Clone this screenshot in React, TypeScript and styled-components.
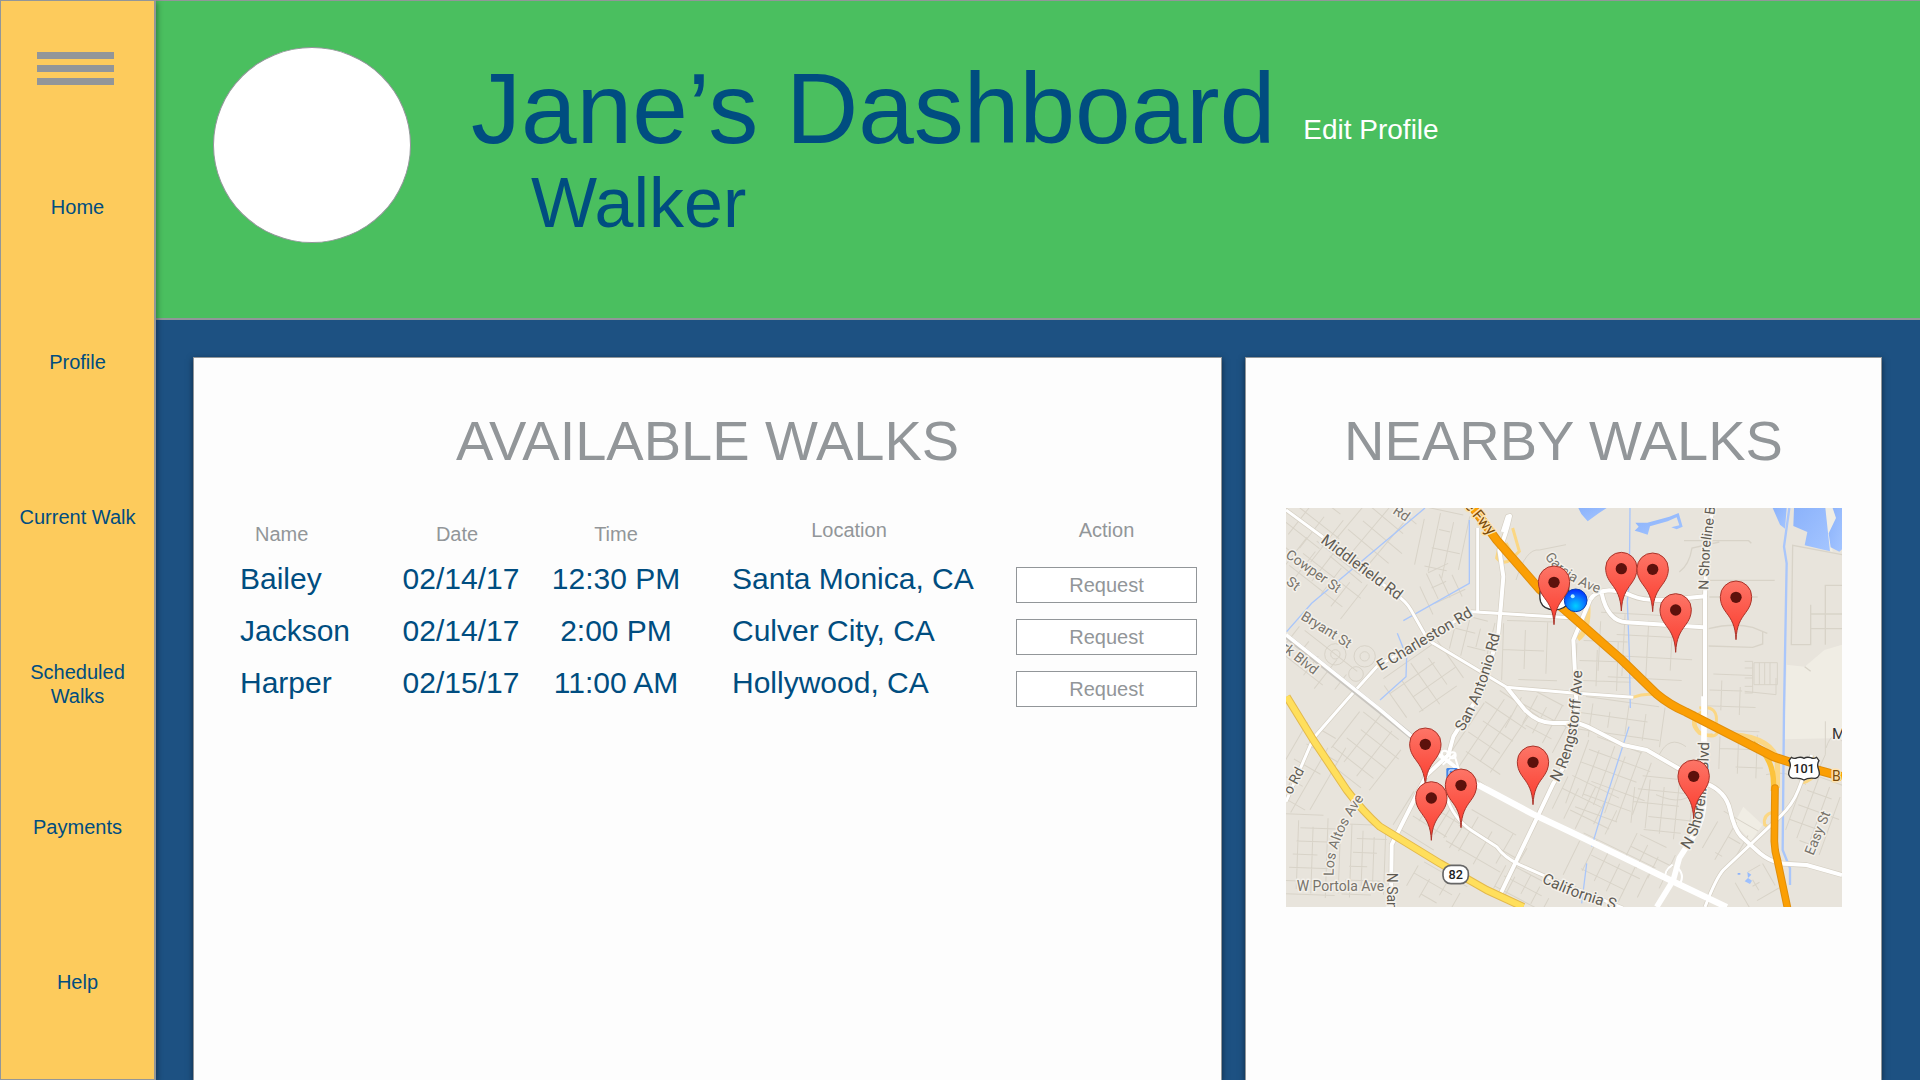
import React from 'react';
import styled, { createGlobalStyle } from 'styled-components';

const color = {
  yellow: '#fdcb5c',
  green: '#4abf5f',
  blue: '#1d5182',
  navy: '#004d80',
  grey: '#929699',
  paper: '#fdfdfd',
};

const GlobalStyle = createGlobalStyle`
  *, *::before, *::after { box-sizing: border-box; }
  body {
    margin: 0;
    font-family: "Liberation Sans", Arial, sans-serif;
    color: ${color.navy};
  }
`;

const Page = styled.div`
  display: grid;
  grid-template-columns: 156px minmax(0, 1fr);
  min-height: 100vh;
`;

const Sidebar = styled.aside`
  position: relative;
  z-index: 1;
  padding-top: 51px;
  background: ${color.yellow};
  border: 1px solid ${color.grey};
  border-right-width: 2px;
  box-shadow: 1px 2px 6px rgba(0, 0, 0, 0.4);
`;

const MenuButton = styled.button`
  display: flex;
  flex-direction: column;
  gap: 6px;
  width: 77px;
  margin: 0 0 0 36px;
  padding: 0;
  border: 0;
  background: none;
  cursor: pointer;
`;

const MenuBar = styled.span`
  width: 100%;
  height: 7px;
  background: ${color.grey};
`;

const NavList = styled.ul`
  margin: 110px 0 0;
  padding: 0 16px;
  list-style: none;
`;

const NavItem = styled.li`
  height: 155px;
  text-align: center;
  &:last-child { height: auto; }
`;

const NavLink = styled.a`
  display: block;
  font-size: 20px;
  line-height: 24px;
  color: ${color.navy};
  text-decoration: none;
`;

const Content = styled.div`
  display: flex;
  flex-direction: column;
  background: ${color.blue};
`;

const Header = styled.header`
  display: flex;
  align-items: flex-start;
  gap: 60px;
  min-height: 320px;
  padding: 46px 57px;
  background: ${color.green};
  border-top: 1px solid ${color.grey};
  border-bottom: 2px solid ${color.grey};
`;

const Avatar = styled.div`
  flex: none;
  width: 198px;
  height: 196px;
  border: 1px solid ${color.grey};
  border-radius: 50%;
  background: #fff;
`;

const Heading = styled.div`
  padding-top: 11px;
`;

const TitleRow = styled.div`
  display: flex;
  align-items: flex-end;
  gap: 28px;
`;

const Title = styled.h1`
  margin: 0;
  font-size: 100px;
  line-height: 100px;
  font-weight: 400;
`;

const EditLink = styled.a`
  font-size: 28px;
  line-height: 56px;
  color: #fff;
  text-decoration: none;
`;

const Role = styled.p`
  margin: 0;
  padding-left: 60px;
  font-size: 70px;
  line-height: 90px;
`;

const Panels = styled.main`
  flex: 1;
  display: grid;
  grid-template-columns: minmax(0, 1029fr) minmax(0, 637fr);
  gap: 23px;
  padding: 37px 38px 0 37px;
`;

const Panel = styled.section`
  background: ${color.paper};
  border: 1px solid ${color.grey};
  border-bottom: 0;
  box-shadow: 0 2px 6px rgba(0, 0, 0, 0.5);
  padding-top: 51px;
`;

const PanelTitle = styled.h2`
  margin: 0;
  font-size: 56px;
  line-height: 64px;
  font-weight: 400;
  text-align: center;
  color: ${color.grey};
`;

const TableArea = styled.div`
  padding: 45px 24px 0 46px;
`;

const WalkTable = styled.table`
  width: 100%;
  table-layout: fixed;
  border-collapse: collapse;
`;

const Column = styled.col<{ $width: number }>`
  width: ${(p) => p.$width}px;
`;

const HeadCell = styled.th<{ $align?: string; $left?: number; $right?: number; $raised?: boolean }>`
  padding: 0 ${(p) => p.$right ?? 0}px ${(p) => (p.$raised ? 17 : 13)}px ${(p) => p.$left ?? 0}px;
  font-size: 20px;
  line-height: 24px;
  font-weight: 400;
  text-align: ${(p) => p.$align ?? 'center'};
  vertical-align: bottom;
  color: ${color.grey};
`;

const Cell = styled.td<{ $align?: string; $left?: number }>`
  height: 52px;
  padding: 0 0 0 ${(p) => p.$left ?? 0}px;
  font-size: 30px;
  line-height: 40px;
  text-align: ${(p) => p.$align ?? 'left'};
  vertical-align: top;
  white-space: nowrap;
`;

const ActionCell = styled.td`
  padding: 8px 0;
  vertical-align: top;
`;

const RequestButton = styled.button`
  display: block;
  width: 100%;
  height: 36px;
  padding: 0;
  border: 1px solid ${color.grey};
  background: #fff;
  font: 20px/24px "Liberation Sans", Arial, sans-serif;
  color: ${color.grey};
  cursor: pointer;
`;

const MapFrame = styled.div`
  padding: 35px 39px 0 40px;
`;

const MapSvg = styled.svg`
  display: block;
  width: 100%;
  height: auto;
  font-family: Roboto, "Liberation Sans", sans-serif;
`;

const Label = styled.text<{ $size?: number; $fill?: string; $halo?: string }>`
  font-size: ${(p) => p.$size ?? 44}px;
  fill: ${(p) => p.$fill ?? '#5e5a52'};
  stroke: ${(p) => p.$halo ?? '#f3f0ea'};
  stroke-width: 9px;
  stroke-linejoin: round;
  paint-order: stroke;
`;

const navItems = ['Home', 'Profile', 'Current Walk', 'Scheduled Walks', 'Payments', 'Help'];

const walks = [
  { name: 'Bailey', date: '02/14/17', time: '12:30 PM', location: 'Santa Monica, CA' },
  { name: 'Jackson', date: '02/14/17', time: '2:00 PM', location: 'Culver City, CA' },
  { name: 'Harper', date: '02/15/17', time: '11:00 AM', location: 'Hollywood, CA' },
];

// Street blocks: centre, half extents, rotation, block size
const blocks = [
  [70, 60, 90, 90, 38, 52, 60],
  [270, 90, 130, 90, -50, 48, 62],
  [470, 110, 70, 100, 12, 44, 58],
  [120, 210, 120, 70, 38, 46, 54],
  [470, 240, 60, 60, -25, 34, 46],
  [90, 470, 110, 60, 38, 50, 48],
  [420, 520, 110, 80, -35, 52, 48],
  [560, 390, 60, 60, 14, 38, 44],
  [740, 430, 90, 90, 2, 66, 88],
  [250, 720, 110, 90, -52, 46, 56],
  [60, 790, 70, 130, 30, 46, 58],
  [620, 690, 130, 80, -56, 52, 44],
  [770, 640, 90, 70, 28, 40, 52],
  [960, 480, 90, 80, 2, 62, 60],
  [1080, 420, 140, 100, 3, 72, 64],
  [1000, 640, 140, 60, 8, 54, 50],
  [980, 820, 110, 110, 20, 40, 44],
  [1130, 900, 90, 90, 6, 44, 40],
  [900, 900, 90, 70, 26, 44, 48],
  [230, 1060, 70, 110, 2, 34, 42],
  [70, 1050, 80, 130, 2, 44, 40],
  [440, 930, 80, 90, -58, 54, 60],
  [600, 1010, 120, 70, 30, 58, 60],
  [720, 1150, 90, 50, 28, 40, 40],
  [970, 1090, 120, 70, 26, 46, 50],
  [1090, 1060, 70, 60, 26, 44, 44],
  [1380, 740, 80, 70, 2, 56, 54],
  [1330, 1000, 60, 70, 30, 50, 60],
  [1420, 1130, 60, 50, -30, 50, 44],
  [1590, 920, 70, 110, 20, 40, 50],
  [1330, 560, 80, 60, 2, 56, 48],
  [450, 1140, 80, 50, 30, 50, 44],
];

const blockPath = ([, , hw, hh, , dx, dy]: number[], seed: number) => {
  let d = '';
  let i = seed;
  for (let x = -hw; x <= hw; x += dx, i += 1) {
    const trim = ((i * 37) % 5) * 9;
    d += `M${x} ${-hh + trim}V${hh - ((i * 23) % 4) * 12}`;
  }
  for (let y = -hh; y <= hh; y += dy, i += 1) {
    const trim = ((i * 29) % 6) * 10;
    d += `M${-hw + trim} ${y}H${hw - ((i * 17) % 5) * 14}`;
  }
  return d;
};

const thinRoads = [
  'M0 6L102 81L332 261Q360 280 375 306L412 371Q424 396 442 406L592 496L662 538L852 554L1042 568',
  'M575 60V310',
  'M0 881L82 691L182 576L272 476L557 311L865 330',
  'M482 866Q500 930 560 970L632 1016Q654 1048 700 1070L790 1110L1010 1200',
  'M1577 741L1537 846Q1520 890 1482 926L1312 1086Q1290 1110 1257 1197',
];

const mainRoads = [
  'M650 72L665 26L672 24Q660 80 640 126L652 206L645 290L637 376L592 540L502 686L487 741L422 801L317 1010L315 1197',
  'M662 538L717 606Q755 645 800 645H870Q890 648 920 664L1012 711L1082 726L1177 781L1260 826Q1320 850 1332 906T1365 985L1422 1036Q1460 1068 1510 1068L1562 1071L1668 1101',
  'M912 276Q925 250 970 247Q1010 250 1040 264T1140 276L1257 265V620',
  'M947 256Q965 340 1022 343L1252 358',
  'M912 276L862 396L872 600Q880 720 802 826L757 921L642 1161',
  'M1280 0L1262 120L1257 265',
];

const creeks = [
  'M417 0L77 286L2 371',
  'M550 36V226L352 338',
  'M334 376L362 446L360 506L282 576',
  'M1032 0L1030 226L1024 280L1030 436L1033 600',
  'M1029 656L962 866L917 1016',
  'M902 1066L887 1186',
];

const ponds = [
  'M877 0H962L938 16L905 40L886 18Z',
  'M1048 44L1084 44L1150 26L1178 15L1190 56L1172 64L1156 58L1180 52L1172 28L1145 40L1092 55L1085 80L1060 72L1046 68L1058 56Z',
  'M1460 0H1502L1497 62L1482 50Z',
  'M1524 0H1618L1632 130L1556 112L1564 72L1522 54Z',
  'M1640 0H1668V124L1660 131L1634 118L1628 76L1650 30Z',
];

const pins = [
  [804, 223],
  [1006, 182],
  [1100, 184],
  [1169, 306],
  [1350, 268],
  [418, 709],
  [436, 870],
  [525, 832],
  [741, 763],
  [1223, 805],
];

const Shield101 = ({ x, y }: { x: number; y: number }) => (
  <g transform={`translate(${x} ${y})`}>
    <path
      d="M-38 -34Q-30 -28 -20 -33Q-8 -36 0 -31Q8 -36 20 -33Q30 -28 38 -34L45 -24Q38 -12 43 0Q52 24 34 29Q12 26 0 34Q-12 26 -34 29Q-52 24 -43 0Q-38 -12 -45 -24Z"
      fill="#fff"
      stroke="#333"
      strokeWidth="4"
    />
    <text y="13" fontSize="38" fontWeight="500" textAnchor="middle" fill="#222">101</text>
  </g>
);

const NearbyMap = () => (
  <MapSvg viewBox="0 0 1668 1197" role="img" aria-label="Map of nearby walks">
    <defs>
      <linearGradient id="pinFill" x1="0" y1="0" x2="0" y2="1">
        <stop offset="0" stopColor="#fd7567" />
        <stop offset="1" stopColor="#fb3b2d" />
      </linearGradient>
      <radialGradient id="dotFill" cx="0.5" cy="0.75" r="0.7">
        <stop offset="0" stopColor="#00d0ff" />
        <stop offset="0.55" stopColor="#0a7dff" />
        <stop offset="1" stopColor="#0433ff" />
      </radialGradient>
      <linearGradient id="water" x1="0" y1="0" x2="1" y2="1">
        <stop offset="0" stopColor="#8bb2fb" />
        <stop offset="1" stopColor="#a4c5ff" />
      </linearGradient>
      <path id="sanAntonio" d="M532 672Q612 540 650 340" />
      <path id="garcia" d="M776 146Q825 225 980 270" />
      <path id="shorelineTop" d="M1267 246L1272 120L1296 -60" />
      <path id="rengstorff" d="M818 824Q895 690 888 440" />
      <path id="shorelineLow" d="M1208 1026Q1270 950 1270 660" />
      <path id="california" d="M766 1122Q860 1175 1080 1230" />
      <path id="losAltos" d="M143 1104Q140 1000 235 870" />
    </defs>

    <rect width="1668" height="1197" fill="#e8e4dc" />
    <path d="M1502 470L1556 476L1615 426L1668 410V690L1495 694Z" fill="#f0ede4" />
    <path d="M1372 896L1430 950L1395 1000L1345 945Z" fill="#f0ede4" />
    <path d="M1618 0H1640L1652 26L1632 78L1640 131L1626 128Z" fill="#f0ede4" />

    <g fill="none" stroke="#d8d3c8" strokeWidth="3">
      {blocks.map((b, i) => (
        <path key={i} d={blockPath(b, i)} transform={`translate(${b[0]} ${b[1]}) rotate(${b[4]})`} />
      ))}
      <circle cx="148" cy="439" r="32" />
      <circle cx="148" cy="439" r="14" />
      <circle cx="236" cy="445" r="32" />
      <circle cx="236" cy="445" r="14" />
      <circle cx="210" cy="498" r="22" />
      <path d="M1194 98H1388L1396 106M1180 192Q1210 170 1218 120L1300 102M1270 217H1466M1270 267H1415" strokeWidth="4" />
      <path d="M1268 362Q1340 344 1400 358L1444 376M1430 372V408L1400 418L1268 414M1668 140L1520 112L1516 410H1574V290M1618 410V232H1668M1574 318H1668M1574 362H1668M1556 476L1574 490" strokeWidth="4" />
      <path d="M1376 460H1400V555H1376M1376 480H1400M1376 510H1400M1376 535H1400M1404 464H1474V530H1404ZM1420 464V530M1436 464V530M1452 464V530M1376 550L1470 560V510" />
      <path d="M690 216Q720 120 760 126L840 110M700 180Q750 240 800 216" />
      <path d="M1120 740Q1150 680 1200 716M1110 860Q1200 900 1230 840M1440 800Q1500 780 1560 830" />
      <path d="M1618 640V740L1600 780M1620 720Q1640 660 1668 700" />
    </g>

    <g fill="url(#water)">
      {ponds.map((d) => <path key={d} d={d} />)}
      <path d="M1355 1095h8v5h-8zM1384 1092l12 8l-10 10l12 8l-6 10l-16-8l10-10z" />
    </g>
    <g fill="none" stroke="#a9c6fb" strokeWidth="4">
      {creeks.map((d) => <path key={d} d={d} />)}
      <path d="M1510 0L1494 116L1502 166L1494 606L1490 1026L1512 1081V1131" strokeWidth="7" />
    </g>

    <g fill="none" stroke="#fbd784" strokeWidth="9">
      <path d="M665 60Q640 100 632 150Q650 172 675 155L700 130L680 60M660 105L690 160" />
      <path d="M905 290Q910 370 875 392" strokeWidth="16" />
      <path d="M1040 568Q1120 540 1170 598" />
      <path d="M1240 600Q1300 590 1290 650Q1310 700 1240 676Q1200 640 1250 610M1225 610Q1220 690 1280 680" />
      <path d="M1462 912Q1430 920 1436 950Q1450 960 1462 948" />
      <path d="M1340 680Q1460 690 1474 760V840" strokeWidth="16" />
      <path d="M1578 745Q1610 810 1550 824" />
    </g>

    <g fill="none" strokeLinejoin="round">
      <g stroke="#d5cfc3" strokeWidth="13">
        {thinRoads.map((d) => <path key={d} d={d} />)}
      </g>
      <g stroke="#d5cfc3" strokeWidth="16">
        {mainRoads.map((d) => <path key={d} d={d} />)}
      </g>
      <g stroke="#fff" strokeWidth="9">
        {thinRoads.map((d) => <path key={d} d={d} />)}
      </g>
      <g stroke="#fff" strokeWidth="12">
        {mainRoads.map((d) => <path key={d} d={d} />)}
        <path d="M1254 565V860Q1256 930 1225 980L1180 1050L1162 1116L1112 1197" strokeWidth="17" />
        <path d="M1160 1070Q1130 1090 1140 1116M1170 1075Q1200 1100 1180 1130" strokeWidth="6" />
      </g>
      <path d="M0 383L282 608L380 688" stroke="#c9c6c0" strokeWidth="17" />
      <path d="M0 380L282 605L372 681L482 756L577 831L740 918L852 971L1162 1121L1322 1197" stroke="#fff" strokeWidth="11" />
      <path d="M577 831L740 918L852 971L1162 1121L1322 1197" stroke="#fff" strokeWidth="19" />
      <g stroke="#fff" strokeWidth="6">
        <circle cx="476" cy="737" r="9" />
        <circle cx="500" cy="742" r="9" />
        <path d="M470 770L505 740L520 790M460 745L510 780" />
      </g>

      <path d="M2 566L82 696L182 846Q230 910 282 956L462 1066L602 1146L712 1197" stroke="#e3b94d" strokeWidth="24" />
      <path d="M2 566L82 696L182 846Q230 910 282 956L462 1066L602 1146L712 1197" stroke="#ffdf5c" strokeWidth="18" />

      <path d="M1400 705Q1470 750 1462 850" stroke="#fcc33c" strokeWidth="16" />
      <path d="M1467 840L1465 1000Q1466 1030 1475 1060L1504 1197" stroke="#e08e0b" strokeWidth="23" strokeLinecap="round" />
      <path d="M1467 840L1465 1000Q1466 1030 1475 1060L1504 1197" stroke="#fb9f04" strokeWidth="17" strokeLinecap="round" />
      <path d="M557 -6L632 96L762 245L837 306L1002 451L1112 558Q1150 590 1200 612L1462 746L1522 766L1668 806" stroke="#e08e0b" strokeWidth="27" />
      <path d="M557 -6L632 96L762 245L837 306L1002 451L1112 558Q1150 590 1200 612L1462 746L1522 766L1668 806" stroke="#fb9f04" strokeWidth="21" />
    </g>

    <g>
      <Label transform="translate(102 102) rotate(37)" $size={46}>Middlefield Rd</Label>
      <Label transform="translate(-4 146) rotate(35)" $size={42} $fill="#77736b">Cowper St</Label>
      <Label transform="translate(-2 226) rotate(38)" $size={42} $fill="#77736b">St</Label>
      <Label transform="translate(42 332) rotate(32)" $size={42} $fill="#77736b">Bryant St</Label>
      <Label transform="translate(-16 424) rotate(38)" $size={42} $fill="#77736b">rk Blvd</Label>
      <Label transform="translate(318 14) rotate(34)" $size={42} $fill="#77736b">Rd</Label>
      <Label transform="translate(284 490) rotate(-31)" $size={46}>E Charleston Rd</Label>
      <Label $size={46}><textPath href="#sanAntonio">San Antonio Rd</textPath></Label>
      <Label transform="translate(534 -6) rotate(50)" $size={46} $fill="#7a4a08" $halo="#fde2b0">e Fwy</Label>
      <Label $size={42} $fill="#77736b"><textPath href="#garcia">Garcia Ave</textPath></Label>
      <Label $size={42}><textPath href="#shorelineTop">N Shoreline Bl</textPath></Label>
      <Label $size={46}><textPath href="#rengstorff">N Rengstorff Ave</textPath></Label>
      <Label $size={46}><textPath href="#shorelineLow">N Shoreline Blvd</textPath></Label>
      <Label $size={46}><textPath href="#california">California S</textPath></Label>
      <Label $size={42} $fill="#77736b"><textPath href="#losAltos">Los Altos Ave</textPath></Label>
      <Label x="32" y="1148" $size={42} $fill="#77736b">W Portola Ave</Label>
      <Label transform="translate(302 1094) rotate(90)" $size={42}>N San</Label>
      <Label transform="translate(16 862) rotate(-62)" $size={42}>o Rd</Label>
      <Label transform="translate(1582 1044) rotate(-68)" $size={42} $fill="#77736b">Easy St</Label>
      <Label x="1638" y="693" $size={46} $fill="#333">M</Label>
      <Label x="1638" y="818" $size={42} $fill="#7a4a08" $halo="#fde2b0">B</Label>
    </g>

    <rect x="471" y="1072" width="76" height="55" rx="24" fill="#fff" stroke="#666" strokeWidth="5" />
    <text x="509" y="1113" fontSize="38" fontWeight="500" textAnchor="middle" fill="#222">82</text>
    <Shield101 x={1554} y={782} />
    <path d="M766 236Q758 262 764 282Q772 304 806 306Q838 304 848 282V236Z" fill="#fff" stroke="#333" strokeWidth="4" />
    <rect x="481" y="780" width="34" height="34" rx="4" fill="#4285e8" />
    <rect x="489" y="786" width="18" height="18" rx="3" fill="none" stroke="#fff" strokeWidth="3" />

    <circle cx="869" cy="277" r="34" fill="url(#dotFill)" stroke="#0a3fb0" strokeWidth="3" />
    <circle cx="860" cy="265" r="6" fill="#b7f0ff" />

    {pins.map(([x, y]) => (
      <g key={`${x}-${y}`} transform={`translate(${x} ${y})`}>
        <path
          d="M0 127C-2 84 -14 66 -29 46C-40 31 -47 18 -47 -2A47 47 0 0 1 47 -2C47 18 40 31 29 46C14 66 2 84 0 127Z"
          fill="url(#pinFill)"
          stroke="#a9342a"
          strokeWidth="3"
        />
        <circle r="17" fill="#5d110c" />
      </g>
    ))}
  </MapSvg>
);

export default function App() {
  return (
    <>
      <GlobalStyle />
      <Page>
        <Sidebar>
          <MenuButton type="button" aria-label="Menu">
            <MenuBar />
            <MenuBar />
            <MenuBar />
          </MenuButton>
          <nav>
            <NavList>
              {navItems.map((item) => (
                <NavItem key={item}>
                  <NavLink href="#">{item}</NavLink>
                </NavItem>
              ))}
            </NavList>
          </nav>
        </Sidebar>
        <Content>
          <Header>
            <Avatar />
            <Heading>
              <TitleRow>
                <Title>Jane’s Dashboard</Title>
                <EditLink href="#">Edit Profile</EditLink>
              </TitleRow>
              <Role>Walker</Role>
            </Heading>
          </Header>
          <Panels>
            <Panel>
              <PanelTitle>AVAILABLE WALKS</PanelTitle>
              <TableArea>
                <WalkTable>
                  <colgroup>
                    <Column $width={150} />
                    <Column $width={142} />
                    <Column $width={168} />
                    <Column $width={316} />
                    <Column $width={181} />
                  </colgroup>
                  <thead>
                    <tr>
                      <HeadCell scope="col" $align="left" $left={15}>Name</HeadCell>
                      <HeadCell scope="col" $right={8}>Date</HeadCell>
                      <HeadCell scope="col">Time</HeadCell>
                      <HeadCell scope="col" $right={18} $raised>Location</HeadCell>
                      <HeadCell scope="col" $raised>Action</HeadCell>
                    </tr>
                  </thead>
                  <tbody>
                    {walks.map((walk) => (
                      <tr key={walk.name}>
                        <Cell>{walk.name}</Cell>
                        <Cell $align="center">{walk.date}</Cell>
                        <Cell $align="center">{walk.time}</Cell>
                        <Cell $left={32}>{walk.location}</Cell>
                        <ActionCell>
                          <RequestButton type="button">Request</RequestButton>
                        </ActionCell>
                      </tr>
                    ))}
                  </tbody>
                </WalkTable>
              </TableArea>
            </Panel>
            <Panel>
              <PanelTitle>NEARBY WALKS</PanelTitle>
              <MapFrame>
                <NearbyMap />
              </MapFrame>
            </Panel>
          </Panels>
        </Content>
      </Page>
    </>
  );
}
